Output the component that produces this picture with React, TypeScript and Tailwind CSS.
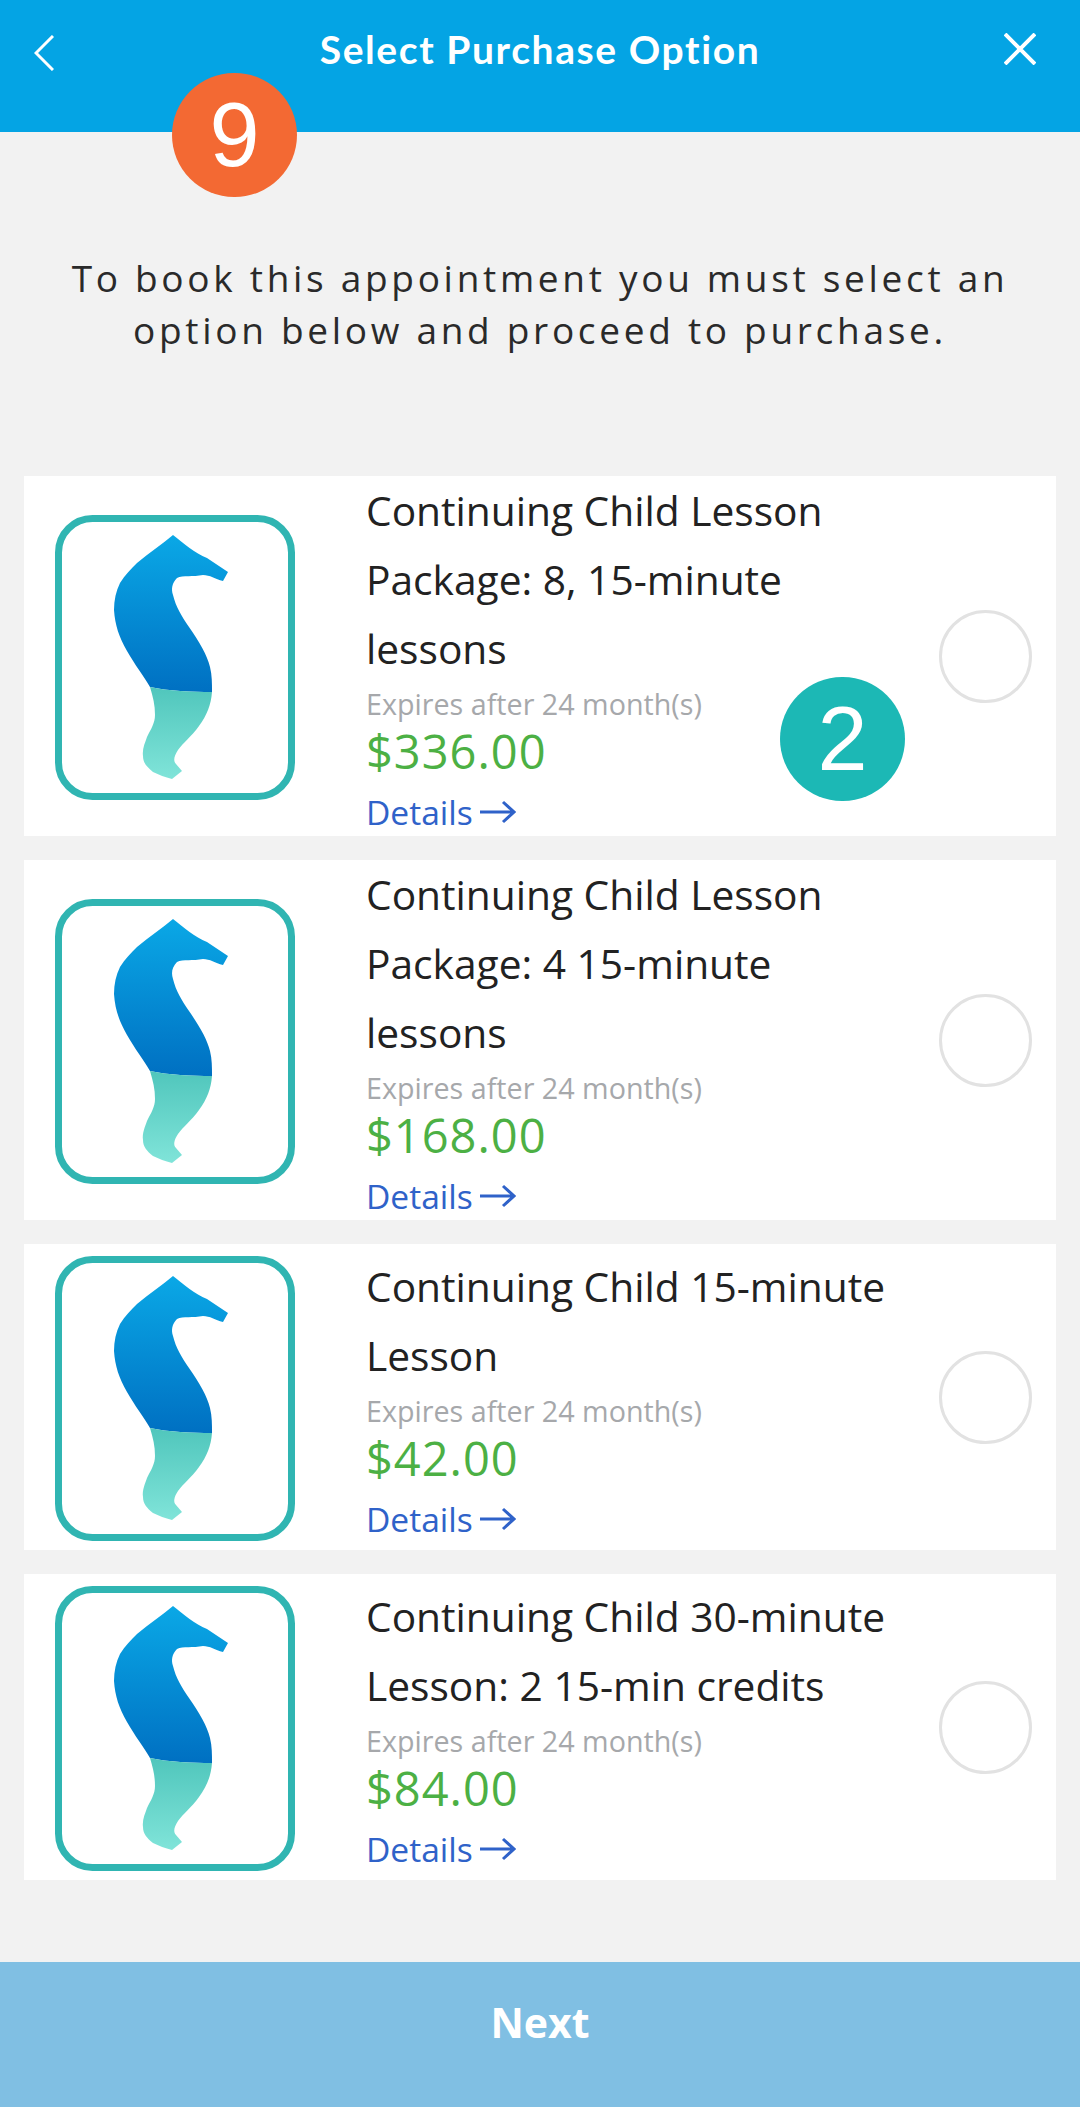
const OPTIONS = [
  { id: 1, lines: ["Continuing Child Lesson", "Package: 8, 15-minute", "lessons"], price: "$336.00" },
  { id: 2, lines: ["Continuing Child Lesson", "Package: 4 15-minute", "lessons"], price: "$168.00" },
  { id: 3, lines: ["Continuing Child 15-minute", "Lesson"], price: "$42.00" },
  { id: 4, lines: ["Continuing Child 30-minute", "Lesson: 2 15-min credits"], price: "$84.00" },
];

function SeahorseLogo({ id }: { id: number }) {
  return (
    <svg className="mt-[2px] h-[285px] w-[240px] shrink-0" viewBox="0 0 240 285" fill="none">
      <defs>
        <linearGradient id={`upper-${id}`} x1="0" y1="20" x2="0" y2="177" gradientUnits="userSpaceOnUse">
          <stop offset="0" stopColor="#0aa8e6" />
          <stop offset="1" stopColor="#0070c2" />
        </linearGradient>
        <linearGradient id={`lower-${id}`} x1="0" y1="172" x2="0" y2="264" gradientUnits="userSpaceOnUse">
          <stop offset="0" stopColor="#50c6bc" />
          <stop offset="1" stopColor="#80e4d9" />
        </linearGradient>
      </defs>
      <rect x="3.5" y="3.5" width="233" height="278" rx="34" fill="#fff" stroke="#30b5b2" strokeWidth="7" />
      <path
        d="M118 20 C128 28 140 38 152 43 L173 57 L168 66 C160 64 155 60 148 60 C138 62 128 60 122 63 C117 68 116 74 118 80 C121 92 126 100 134 112 C145 128 152 140 155 152 C157 160 157 168 157 177 C138 177 112 176 95 172 C88 160 80 150 72 136 C64 122 60 110 59 95 C59 85 61 76 65 68 C70 60 76 54 82 48 C94 38 106 30 118 20 Z"
        fill={`url(#upper-${id})`}
      />
      <path
        d="M95 172 C112 176 138 177 157 177 C156 190 152 200 144 211 C136 222 128 228 123 235 C119 241 118 246 121 249 L127 256 L117 264 C110 262 104 260 98 257 C92 252 88 248 88 241 C87 234 90 228 92 222 C96 214 100 208 100 200 C100 190 98 182 95 172 Z"
        fill={`url(#lower-${id})`}
      />
    </svg>
  );
}

function OptionCard({ id, lines, price }: { id: number; lines: string[]; price: string }) {
  return (
    <div className="flex min-h-[306px] items-center bg-white pl-[31px] pr-[24px]">
      <SeahorseLogo id={id} />
      <div className="ml-[71px] min-w-0 flex-1">
        {lines.map((line) => (
          <div key={line} className="h-[69px] text-[40.7px] leading-[69px] whitespace-nowrap text-[#222222]">
            {line}
          </div>
        ))}
        <div className="h-[42px] text-[28.7px] leading-[42px] text-[#a6a8ab]">Expires after 24 month(s)</div>
        <div className="h-[52px] text-[47px] leading-[52px] tracking-[1px] text-[#4cb044]">{price}</div>
        <div className="mt-[11px] flex h-[48px] items-center gap-[6px] text-[33.6px] leading-[48px] text-[#2f62c9]">
          Details
          <svg className="h-[24px] w-[37px]" viewBox="0 0 37 24" fill="none" stroke="currentColor" strokeWidth="3">
            <path d="M1 12H35M24 2L35 12L24 22" />
          </svg>
        </div>
      </div>
      <div className="h-[93px] w-[93px] shrink-0 rounded-full border-[3px] border-[#e2e2e2] bg-white" />
    </div>
  );
}

export default function App() {
  return (
    <div className="relative flex h-[2107px] w-[1080px] flex-col overflow-hidden bg-[#f2f2f2] font-['Open_Sans',sans-serif]">
      {/* Header */}
      <header className="flex h-[132px] shrink-0 items-start bg-[#04a4e4] pl-[34px] pr-[44px] pt-[33px] text-white">
        <div className="flex-1">
          <svg className="mt-[2px] h-[36px] w-[20px]" viewBox="0 0 20 36" fill="none" stroke="currentColor" strokeWidth="3">
            <path d="M19 1L2 18L19 35" />
          </svg>
        </div>
        <h1 className="-mt-[1px] ml-[10px] font-['Lato',sans-serif] text-[39px] leading-[34px] font-bold tracking-[1.6px]">Select Purchase Option</h1>
        <div className="flex flex-1 justify-end">
          <svg className="h-[32px] w-[32px]" viewBox="0 0 32 32" fill="none" stroke="currentColor" strokeWidth="4">
            <path d="M1 1L31 31M31 1L1 31" />
          </svg>
        </div>
      </header>

      {/* Instructions */}
      <p className="mt-[120px] text-center text-[37px] leading-[52px] tracking-[3.7px] text-[#2a2a2a]">
        To book this appointment you must select an
        <br />
        option below and proceed to purchase.
      </p>

      {/* Purchase options */}
      <div className="mt-[120px] flex flex-col gap-[24px] px-[24px]">
        {OPTIONS.map((o) => (
          <OptionCard key={o.id} id={o.id} lines={o.lines} price={o.price} />
        ))}
      </div>

      {/* Next */}
      <div className="mt-auto flex h-[145px] shrink-0 items-start justify-center bg-[#80bfe3] pt-[32px] text-[41px] leading-[56px] font-bold text-white">
        Next
      </div>

      {/* Step badges */}
      <div className="absolute left-[172px] top-[73px] flex h-[124px] w-[125px] items-center justify-center rounded-full bg-[#f36933] font-['Liberation_Sans',sans-serif] text-[90px] text-white">
        9
      </div>
      <div className="absolute left-[780px] top-[677px] flex h-[124px] w-[125px] items-center justify-center rounded-full bg-[#1cb8b5] font-['Liberation_Sans',sans-serif] text-[90px] text-white">
        2
      </div>
    </div>
  );
}
